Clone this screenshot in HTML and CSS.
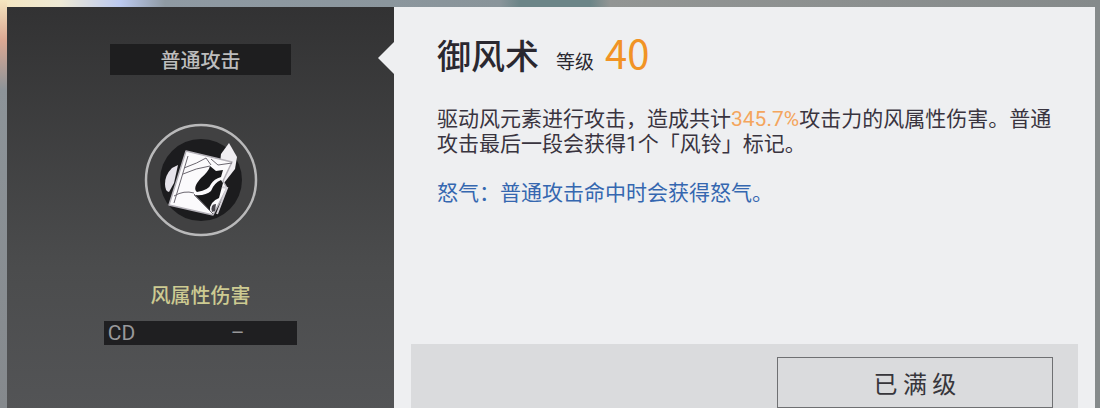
FILE: index.html
```html
<!DOCTYPE html>
<html lang="zh-CN">
<head>
    <meta charset="UTF-8">
    <meta name="viewport" content="width=device-width, initial-scale=1.0">
    <title>御风术</title>
    <link rel="stylesheet" href="styles.css">
</head>
<body>
    <main class="skill-card">
        <aside class="skill-side">
            <div class="skill-type">普通攻击</div>
            <svg class="skill-icon" viewBox="0 0 114 114" aria-hidden="true">
                <circle cx="57" cy="57" r="55" fill="#414142" stroke="#b9b9ba" stroke-width="2.5"/>
                <circle cx="57" cy="57" r="41" fill="#1c1c1e"/>
                <!-- pages sticking out -->
                <path d="M34 42 L28 45 Q21 52 21 61 Q21 68 25 69 L30 60Z" fill="#e6e3ea"/>
                <path d="M85 20 L93 34 L91 46 L80 60 L76 40 L77 31Z" fill="#f0eef2"/>
                <!-- cover -->
                <path d="M42 28 L88 39 L79 58 L83 65 L69 92 L25 82Z" fill="#fbfafc" stroke="#b5b2b9" stroke-width="1.5" stroke-linejoin="round"/>
                <path d="M66 43 L72 48 L79 47 L77 54 Q70 56 67 61 Q65 67 53 69 Q48 65 57 55 Q65 48 66 43Z" fill="#171719"/>
                <path d="M77 57 L79 60 L75 75 Q65 79 66 88 L50 72 Q62 73 67 68 Q70 60 77 57Z" fill="#171719"/>
                <path d="M78 64 L83 65 L73 91" fill="none" stroke="#d5d2d8" stroke-width="2"/>
                <path d="M72 81 Q66 81 68 89 L71 88Z" fill="#49464d"/>
                <path d="M44 33 L30 80 M40 45 Q54 40 62 35 L67 42 M39 51 Q52 45 66 43 M67 36 L74 42 L88 40 M30 73 Q40 67 50 70 M50 71 L69 91" fill="none" stroke="#6b6770" stroke-width="1"/>
            </svg>
            <div class="skill-element">风属性伤害</div>
            <dl class="cooldown">
                <dt>CD</dt>
                <dd>–</dd>
            </dl>
        </aside>
        <section class="skill-main">
            <header class="skill-header">
                <h1>御风术</h1>
                <span class="level-label">等级</span>
                <span class="level">40</span>
            </header>
            <div class="skill-text">
                <p>驱动风元素进行攻击，造成共计<span class="value">345.7%</span>攻击力的风属性伤害。普通攻击最后一段会获得1个「风铃」标记。</p>
                <p class="rage">怒气：普通攻击命中时会获得怒气。</p>
            </div>
            <footer class="skill-footer">
                <button type="button">已 满 级</button>
            </footer>
        </section>
    </main>
</body>
</html>
```
FILE: styles.css
```css
* {
    box-sizing: border-box;
}

body {
    margin: 0;
    padding: 7px 5px 0 7px;
    min-height: 100vh;
    display: flex;
    font-family: "Noto Sans CJK SC", sans-serif;
    background:
        linear-gradient(#f5e6c0 0, #dba893 40px, #8d9499 90px, #85898d 100%) left / 7px 100% no-repeat,
        linear-gradient(90deg, #f5e6c0 0, #eee9d5 60px, #bccaf0 120px, #8f9aa3 165px, #89949a 500px, #6c8588 520px, #6c8588 590px, #929594 610px, #858a8b 100%);
}

.skill-card {
    flex: 1;
    display: grid;
    grid-template-columns: 387fr 701fr;
    background-color: #eeeff1;
}

.skill-side {
    position: relative;
    display: flex;
    flex-direction: column;
    align-items: center;
    padding-top: 37px;
    background: linear-gradient(#323233, #4b4c4d 65%, #535456);
}

/* arrow pointing at the skill */
.skill-side::after {
    content: "";
    position: absolute;
    top: 35px;
    right: 0;
    border: 16px solid transparent;
    border-left: 0;
    border-right-color: #eeeff1;
}

.skill-type {
    width: 47%;
    background-color: #1e1e1f;
    color: #bdbdbd;
    font-size: 20px;
    font-weight: 500;
    line-height: 31px;
    text-align: center;
}

.skill-icon {
    width: 114px;
    height: 114px;
    margin-top: 48px;
}

.skill-element {
    margin-top: 43px;
    color: #cdcb92;
    font-size: 20px;
    font-weight: 500;
    line-height: 30px;
}

.cooldown {
    display: flex;
    width: 50%;
    margin: 11px 0 0;
    padding: 0 4px;
    background-color: #1f1f21;
    color: #98989a;
    font-family: Roboto, sans-serif;
    font-size: 21px;
    line-height: 24px;
}

.cooldown dt {
    flex: 2;
}

.cooldown dd {
    flex: 3;
    margin: 0;
    text-align: center;
}

.skill-main {
    display: flex;
    flex-direction: column;
    padding: 20px 17px 0;
}

.skill-header {
    display: flex;
    align-items: baseline;
    padding-left: 26px;
    line-height: 50px;
    color: #2a2830;
}

.skill-header h1 {
    margin: 0 17px 0 0;
    font-size: 34px;
    font-weight: 500;
}

.level-label {
    margin-right: 11px;
    font-size: 19px;
}

.level {
    color: #f19325;
    font-size: 40px;
}

.skill-text {
    margin-top: 21px;
    padding: 0 12px 0 26px;
    color: #39343f;
    font-family: Roboto, "Noto Sans CJK SC", sans-serif;
    font-size: 21px;
    line-height: 25px;
}

.skill-text p {
    margin: 0 0 24px;
}

.skill-text .value {
    color: #f4a55d;
}

.skill-text .rage {
    color: #3567b0;
}

.skill-footer {
    display: flex;
    justify-content: flex-end;
    margin-top: auto;
    padding: 13px 25px 0;
    background-color: #dadbdd;
}

.skill-footer button {
    width: 276px;
    height: 51px;
    border: 1px solid #6f7072;
    background: none;
    color: #37363b;
    font-family: inherit;
    font-size: 24px;
}
```
